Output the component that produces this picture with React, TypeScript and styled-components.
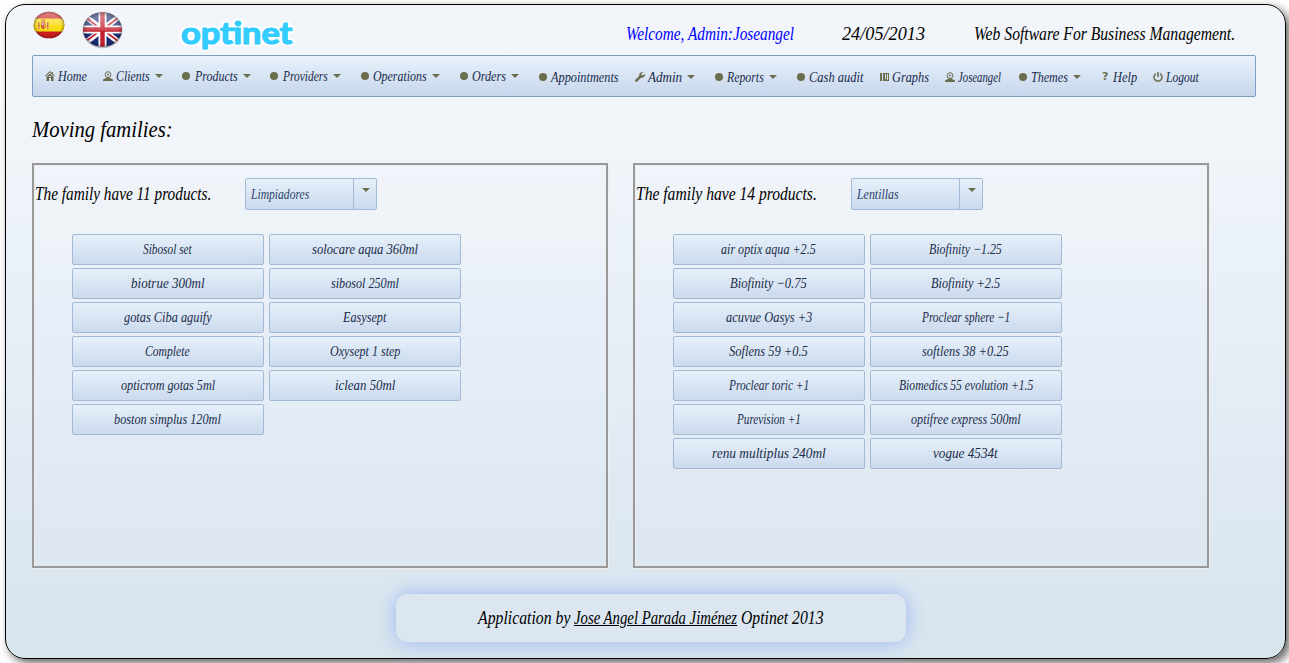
import React, { useLayoutEffect, useRef, useState } from 'react';
import styled, { createGlobalStyle } from 'styled-components';

const GlobalStyle = createGlobalStyle`
  * { box-sizing: border-box; }
  body {
    display: flow-root;
    min-height: 663px;
    margin: 0;
    background: #fff;
    overflow: hidden;
    font-family: 'Liberation Serif', serif;
    font-style: italic;
    color: #000;
  }
`;

const olive = '#6b6e4e';

const FitBox = styled.span<{ $width: number }>`
  display: inline-block;
  flex: none;
  width: ${p => p.$width}px;
  white-space: nowrap;
`;
const FitInner = styled.span`
  display: inline-block;
  transform-origin: left center;
`;

/* Condenses or widens a label so that it fills its column exactly. */
function Fit({ width, children }: { width: number; children: React.ReactNode }) {
  const ref = useRef<HTMLSpanElement>(null);
  const [scale, setScale] = useState(1);
  useLayoutEffect(() => {
    if (ref.current) setScale(width / ref.current.offsetWidth);
  }, [width]);
  return (
    <FitBox $width={width}>
      <FitInner ref={ref} style={{ transform: `scaleX(${scale})` }}>{children}</FitInner>
    </FitBox>
  );
}

const Page = styled.div`
  display: flex;
  flex-direction: column;
  width: 1281px;
  height: 655px;
  margin: 4px 0 4px 5px;
  padding: 0 26px;
  border: 1px solid #000;
  border-radius: 20px;
  background: linear-gradient(#f2f5fa 0%, #f1f5fa 22%, #e9f0f8 42%, #e3ebf4 65%, #dce7f0 85%, #d8e5ed 100%);
  box-shadow: 4px 4px 10px #666;
`;

const Header = styled.header`
  display: flex;
  align-items: flex-start;
  height: 50px;
  font-size: 18px;
  line-height: 22px;
`;
const Flags = styled.div`
  display: flex;
  gap: 16px;
  width: 149px;
  padding: 5px 0 0 1px;
`;
const Logo = styled.div`
  padding-top: 9px;
  font: 700 30px/36px Lato, sans-serif;
  color: #33ccff;
  width: 111px;
  -webkit-text-stroke: 1.2px #33ccff;
  text-shadow: 0 0 3px #fff, 2px 2px 1px #fff, -2px -2px 1px #fff, 2px -2px 1px #fff, -2px 2px 1px #fff, 3px 0 1px #fff, -3px 0 1px #fff;
`;
const HeaderText = styled.div<{ $gap: number; $color?: string }>`
  margin-left: ${p => p.$gap}px;
  padding-top: 18px;
  color: ${p => p.$color || '#000'};
`;

const Nav = styled.nav`
  display: flex;
  align-items: center;
  height: 42px;
  flex: none;
  width: 1224px;
  padding-left: 12px;
  border: 1px solid #809dc3;
  border-radius: 2px;
  background: linear-gradient(#e9f2fb, #c6d6ec);
  color: #182b4d;
  font-size: 15px;
  line-height: 18px;
`;
const NavItem = styled.a<{ $after: number; $low?: boolean }>`
  display: flex;
  align-items: center;
  flex: none;
  margin-right: ${p => p.$after}px;
  padding-top: ${p => (p.$low ? 2 : 0)}px;
`;
const IconSlot = styled.span<{ $width: number }>`
  display: flex;
  align-items: center;
  width: ${p => p.$width}px;
  height: 18px;
`;
const Dot = styled.span`
  width: 8px;
  height: 8px;
  border-radius: 50%;
  background: ${olive};
`;
const QuestionMark = styled.span`
  font: bold 11px/12px 'DejaVu Sans', sans-serif;
  color: ${olive};
`;
const Caret = styled.span`
  display: block;
  width: 8px;
  height: 4px;
  margin: -1px 0 0 5px;
  border: 4px solid transparent;
  border-top-color: ${olive};
  border-bottom-width: 0;
`;

const Title = styled.h1`
  margin: 19px 0 19px;
  font-size: 23px;
  line-height: 28px;
  font-weight: normal;
`;
const Panels = styled.main`
  display: flex;
  gap: 25px;
  flex: none;
`;
const Panel = styled.section`
  width: 576px;
  height: 405px;
  padding: 13px 0 0 1px;
  border: 2px solid #999;
  box-shadow: inset 1px 1px 0 #eee, 1px 1px 0 #eee;
  background: linear-gradient(#f1f4fa, #edf3f7 18%, #e8eff8 33%, #e3ebf4 65%, #dde7f0);
`;
const PanelHead = styled.div`
  display: flex;
  align-items: center;
  gap: 34px;
  height: 32px;
  font-size: 18px;
`;
const Select = styled.div`
  display: flex;
  width: 132px;
  height: 32px;
  border: 1px solid #a3bad6;
  border-radius: 2px;
  background: linear-gradient(#e6f0fa, #cbdaed);
  color: #2b4367;
  font-size: 15px;
  line-height: 30px;
`;
const SelectValue = styled.span`
  width: 108px;
  padding-left: 5px;
  border-right: 1px solid #a3bad6;
`;
const SelectArrow = styled.span`
  flex: 1;
  padding: 10px 0 0 3px;
`;
const Grid = styled.div`
  display: grid;
  grid-template-columns: 192px 192px;
  gap: 3px 5px;
  padding: 24px 0 0 37px;
`;
const Product = styled.button`
  display: flex;
  justify-content: center;
  align-items: center;
  height: 31px;
  padding: 0 1px 0 0;
  border: 1px solid #a3bad6;
  border-radius: 2px;
  background: linear-gradient(#e6f0fa, #cbdaed);
  color: #1b2c4a;
  font: italic 15px 'Liberation Serif', serif;
`;
const Footer = styled.footer`
  display: flex;
  justify-content: center;
  align-items: center;
  gap: 4px;
  align-self: center;
  width: 510px;
  height: 48px;
  margin: 26px 0 0 10px;
  border-radius: 12px;
  background: #dbe6f0;
  box-shadow: 0 0 20px #99b5f5;
  font-size: 18px;
`;
const Link = styled.a`
  text-decoration: underline;
`;

const SpainFlag = () => (
  <svg width="32" height="29" viewBox="0 0 32 29">
    <defs>
      <clipPath id="es"><ellipse cx="16" cy="15" rx="15.3" ry="13.3" /></clipPath>
      <linearGradient id="gloss" x2="0" y2="1">
        <stop offset="0" stopColor="#fff" stopOpacity=".5" />
        <stop offset=".5" stopColor="#fff" stopOpacity=".2" />
        <stop offset=".55" stopColor="#fff" stopOpacity="0" />
      </linearGradient>
      <radialGradient id="rim"><stop offset=".75" stopOpacity="0" /><stop offset="1" stopOpacity=".35" /></radialGradient>
    </defs>
    <g clipPath="url(#es)">
      <path fill="#c9201f" d="M0 0h32v29H0z" />
      <path fill="#f8dc14" d="M0 8.500h32v13H0z" />
      <path fill="#d0603a" d="M8 12h4.500v5.500L10.200 19.500 8 17.500zM5 12h1.500v7H5zM14 12h1.500v7H14zM8.500 9.500h3.500v2H8.500z" />
      <path fill="#e9bd9a" d="M9 13h1.500v2H9zM11 15.500h1v1.500h-1zM4 17h3v1H4zM13 17h3v1h-3z" />
      <path fill="url(#gloss)" d="M0 0h32v29H0z" />
      <path fill="url(#rim)" d="M0 1h32v28H0z" />
    </g>
  </svg>
);
const UkFlag = () => (
  <svg width="42" height="39" viewBox="0 0 42 39">
    <defs><clipPath id="uk"><ellipse cx="21.500" cy="19.500" rx="19.500" ry="17.300" /></clipPath></defs>
    <ellipse cx="21.500" cy="20.500" rx="20" ry="17.800" fill="#888" opacity=".5" />
    <g clipPath="url(#uk)">
      <path fill="#1c2c72" d="M0 0h43v39H0z" />
      <path stroke="#fff" strokeWidth="5.500" d="M-1 2l45 35M-1 37L44 2" />
      <path stroke="#c41f2e" strokeWidth="1.800" d="M-1 3l22 17M21 19l23 17.500M-1 36l22-17M21 20L44 2.500" />
      <path stroke="#fff" strokeWidth="8" d="M21.500 0v39M0 19.500h43" />
      <path stroke="#c41f2e" strokeWidth="4.500" d="M21.500 0v39M0 19.500h43" />
      <path fill="url(#gloss)" d="M0 0h43v39H0z" />
      <path fill="url(#rim)" d="M1 2h41v36H1z" />
    </g>
  </svg>
);

type IconKind = 'home' | 'person' | 'dot' | 'wrench' | 'book' | 'help' | 'power';

function NavIcon({ kind }: { kind: IconKind }) {
  if (kind === 'dot') return <Dot />;
  if (kind === 'help') return <QuestionMark>?</QuestionMark>;
  return (
    <svg width="10" height="10" viewBox="0 0 10 10" fill={olive}>
      {kind === 'home' && (
        <path d="M5 0L0 4.800l.6.700L5 1.500l4.400 4 .6-.7L8 2.900V1H7v1zM5 2.500L1.500 5.700V10H4V7h2v3h2.500V5.700zM4 5h2v1H4z" fillRule="evenodd" />
      )}
      {kind === 'person' && (
        <>
          <circle cx="5" cy="3.600" r="2.900" fill="none" stroke={olive} />
          <path d="M0 10V8.500L2.500 7.200 3.800 6.300 5 7l1.200-.7 1.300.9L10 8.500V10zM4 2.800h2v1.500H4z" />
        </>
      )}
      {kind === 'wrench' && <path d="M0 8.200L4.200 4V2L6.400 0H8L6.500 1.700v1.600h1.700L10 1.700v2L8 5.800H6L2 9.800H.8L0 9z" />}
      {kind === 'book' && <path d="M0 1h2v8H0zM3 1h6v8H3zM5 2v5h1V2zM7 2v6h1V2z" fillRule="evenodd" />}
      {kind === 'power' && (
        <path d="M3 1.700a4 4 0 1 0 4 0M5 0v5" fill="none" stroke={olive} strokeWidth="1.500" />
      )}
    </svg>
  );
}

const navItems: { label: string; icon: IconKind; slot: number; width: number; after: number; menu?: boolean; low?: boolean }[] = [
  { label: 'Home', icon: 'home', slot: 13, width: 29, after: 16 },
  { label: 'Clients', icon: 'person', slot: 13, width: 34, after: 19, menu: true },
  { label: 'Products', icon: 'dot', slot: 13, width: 43, after: 19, menu: true },
  { label: 'Providers', icon: 'dot', slot: 13, width: 45, after: 20, menu: true },
  { label: 'Operations', icon: 'dot', slot: 12, width: 54, after: 20, menu: true },
  { label: 'Orders', icon: 'dot', slot: 12, width: 34, after: 20, menu: true },
  { label: 'Appointments', icon: 'dot', slot: 12, width: 68, after: 16, low: true },
  { label: 'Admin', icon: 'wrench', slot: 13, width: 34, after: 20, menu: true, low: true },
  { label: 'Reports', icon: 'dot', slot: 12, width: 37, after: 20, menu: true, low: true },
  { label: 'Cash audit', icon: 'dot', slot: 12, width: 54, after: 17, low: true },
  { label: 'Graphs', icon: 'book', slot: 12, width: 37, after: 16, low: true },
  { label: 'Joseangel', icon: 'person', slot: 13, width: 43, after: 18, low: true },
  { label: 'Themes', icon: 'dot', slot: 12, width: 37, after: 21, menu: true, low: true },
  { label: 'Help', icon: 'help', slot: 11, width: 24, after: 16, low: true },
  { label: 'Logout', icon: 'power', slot: 13, width: 33, after: 0, low: true },
];

type Entry = [string, number];

const families: { count: Entry; name: Entry; products: Entry[] }[] = [
  {
    count: ['The family have 11 products.', 176],
    name: ['Limpiadores', 58],
    products: [
      ['Sibosol set', 49], ['solocare aqua 360ml', 106],
      ['biotrue 300ml', 74], ['sibosol 250ml', 68],
      ['gotas Ciba aguify', 88], ['Easysept', 43],
      ['Complete', 45], ['Oxysept 1 step', 70],
      ['opticrom gotas 5ml', 94], ['iclean 50ml', 60],
      ['boston simplus 120ml', 107],
    ],
  },
  {
    count: ['The family have 14 products.', 181],
    name: ['Lentillas', 42],
    products: [
      ['air optix aqua +2.5', 95], ['Biofinity −1.25', 73],
      ['Biofinity −0.75', 77], ['Biofinity +2.5', 69],
      ['acuvue Oasys +3', 86], ['Proclear sphere −1', 88],
      ['Soflens 59 +0.5', 79], ['softlens 38 +0.25', 87],
      ['Proclear toric +1', 80], ['Biomedics 55 evolution +1.5', 134],
      ['Purevision +1', 64], ['optifree express 500ml', 110],
      ['renu multiplus 240ml', 114], ['vogue 4534t', 65],
    ],
  },
];

export default function App() {
  return (
    <>
      <GlobalStyle />
      <Page>
        <Header>
          <Flags><SpainFlag /><UkFlag /></Flags>
          <Logo><Fit width={111}>optinet</Fit></Logo>
          <HeaderText $gap={334} $color="#0000ff"><Fit width={168}>Welcome, Admin:Joseangel</Fit></HeaderText>
          <HeaderText $gap={48}><Fit width={83}>24/05/2013</Fit></HeaderText>
          <HeaderText $gap={49}><Fit width={261}>Web Software For Business Management.</Fit></HeaderText>
        </Header>
        <Nav>
          {navItems.map(item => (
            <NavItem key={item.label} $after={item.after} $low={item.low}>
              <IconSlot $width={item.slot}><NavIcon kind={item.icon} /></IconSlot>
              <Fit width={item.width}>{item.label}</Fit>
              {item.menu && <Caret />}
            </NavItem>
          ))}
        </Nav>
        <Title><Fit width={141}>Moving families:</Fit></Title>
        <Panels>
          {families.map(family => (
            <Panel key={family.name[0]}>
              <PanelHead>
                <Fit width={family.count[1]}>{family.count[0]}</Fit>
                <Select>
                  <SelectValue><Fit width={family.name[1]}>{family.name[0]}</Fit></SelectValue>
                  <SelectArrow><Caret /></SelectArrow>
                </Select>
              </PanelHead>
              <Grid>
                {family.products.map(([name, width]) => (
                  <Product key={name}><Fit width={width}>{name}</Fit></Product>
                ))}
              </Grid>
            </Panel>
          ))}
        </Panels>
        <Footer>
          <Fit width={92}>Application by</Fit>
          <Fit width={163}><Link>Jose Angel Parada Jiménez</Link></Fit>
          <Fit width={83}>Optinet 2013</Fit>
        </Footer>
      </Page>
    </>
  );
}
